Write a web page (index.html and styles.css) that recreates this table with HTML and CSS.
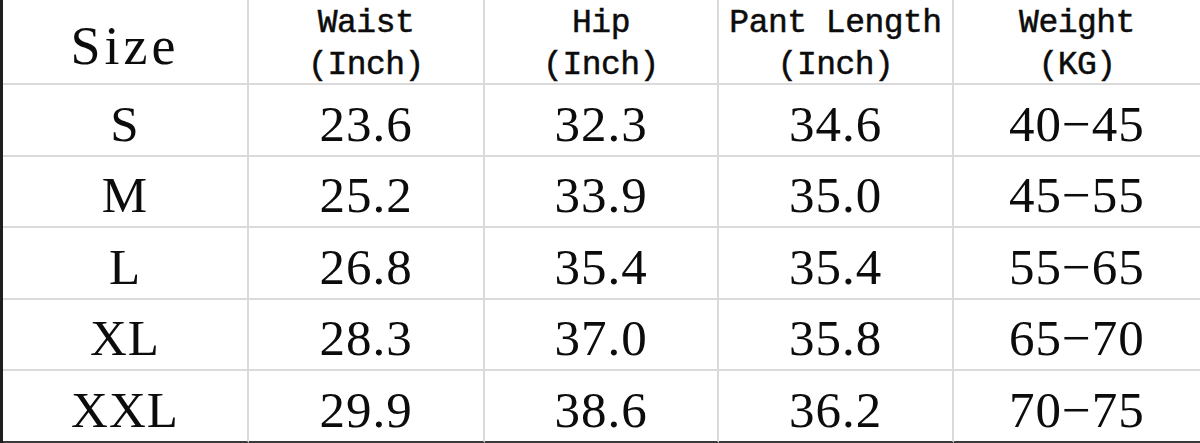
FILE: index.html
```html
<!DOCTYPE html>
<html>
<head>
<meta charset="utf-8">
<link rel="stylesheet" href="styles.css">
</head>
<body>
<div class="chart">
  <div class="cell head size-head">Size</div>
  <div class="cell head"><span>Waist</span><span>(Inch)</span></div>
  <div class="cell head"><span>Hip</span><span>(Inch)</span></div>
  <div class="cell head"><span>Pant Length</span><span>(Inch)</span></div>
  <div class="cell head last"><span>Weight</span><span>(KG)</span></div>

  <div class="cell">S</div><div class="cell">23.6</div><div class="cell">32.3</div><div class="cell">34.6</div><div class="cell last">40−45</div>
  <div class="cell">M</div><div class="cell">25.2</div><div class="cell">33.9</div><div class="cell">35.0</div><div class="cell last">45−55</div>
  <div class="cell">L</div><div class="cell">26.8</div><div class="cell">35.4</div><div class="cell">35.4</div><div class="cell last">55−65</div>
  <div class="cell">XL</div><div class="cell">28.3</div><div class="cell">37.0</div><div class="cell">35.8</div><div class="cell last">65−70</div>
  <div class="cell bottom">XXL</div><div class="cell bottom">29.9</div><div class="cell bottom">38.6</div><div class="cell bottom">36.2</div><div class="cell bottom last">70−75</div>
</div>
</body>
</html>
```
FILE: styles.css
```css
html, body {
  margin: 0;
  padding: 0;
  background: #ffffff;
}

.chart {
  width: 1200px;
  height: 443px;
  box-sizing: border-box;
  border-left: 3px solid #1e1e1e;
  display: grid;
  grid-template-columns: 246px 236px 234px 235px 1fr;
  grid-template-rows: 85px 72px 71px 72px 71px 72px;
  color: #0c0c0c;
  font-family: "Liberation Serif", "DejaVu Serif", serif;
  font-size: 51px;
}

.cell {
  box-sizing: border-box;
  border-right: 2px solid #dadada;
  border-bottom: 2px solid #dadada;
  display: flex;
  align-items: center;
  justify-content: center;
  padding-top: 7px;
  letter-spacing: 1px;
}

.cell.last {
  border-right: none;
}

.cell.bottom {
  border-bottom: 2px solid #3a3a3a;
}

.head {
  flex-direction: column;
  font-family: "Liberation Mono", "DejaVu Sans Mono", monospace;
  font-size: 33px;
  line-height: 42px;
  letter-spacing: -0.5px;
  padding-top: 6px;
  -webkit-text-stroke: 0.5px #0c0c0c;
}

.size-head {
  font-family: "Liberation Serif", "DejaVu Serif", serif;
  font-size: 54px;
  letter-spacing: 4px;
  padding-top: 8px;
  -webkit-text-stroke: 0;
}
```
